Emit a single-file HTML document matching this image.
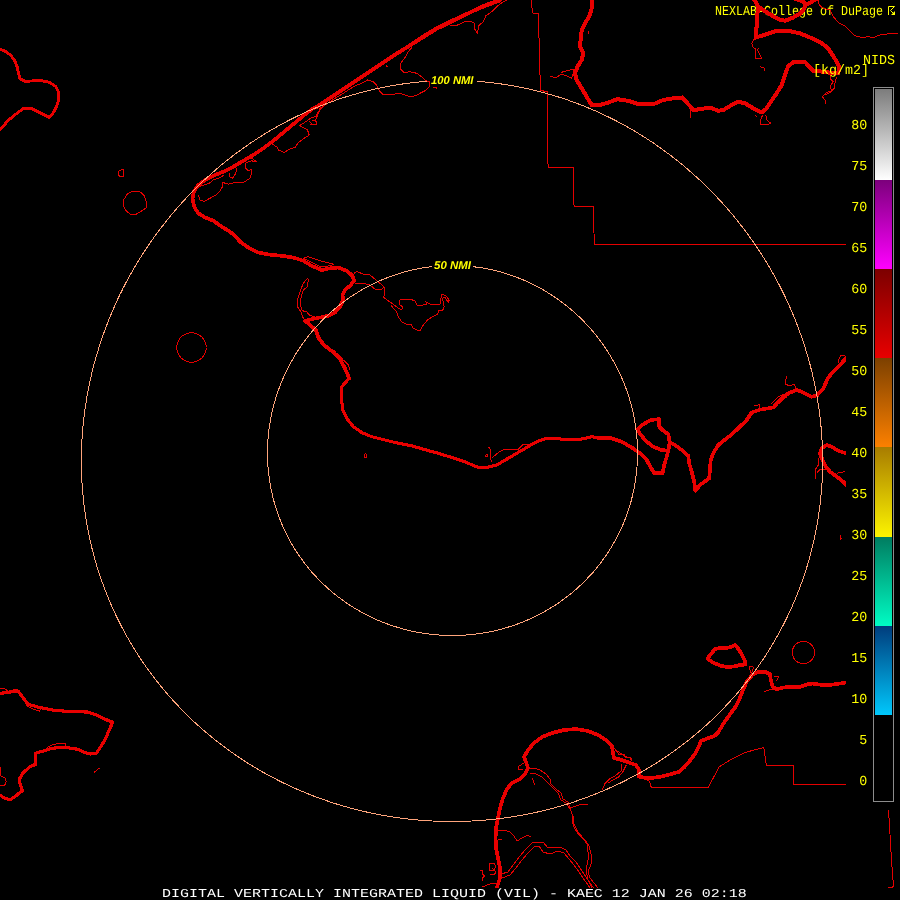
<!DOCTYPE html>
<html lang="en"><head><meta charset="utf-8"><title>DIGITAL VERTICALLY INTEGRATED LIQUID (VIL) - KAEC</title>
<style>
html,body{margin:0;padding:0;background:#000;}
body{width:900px;height:900px;overflow:hidden;}
svg{display:block;will-change:transform;}
text{text-rendering:geometricPrecision;}
.m{font-family:"Liberation Mono",monospace;font-size:13.66px;fill:#ffff00;}
.w{font-family:"Liberation Mono",monospace;font-size:13.66px;fill:#ffffff;}
.r{font-family:"Liberation Sans",sans-serif;font-weight:bold;font-style:italic;font-size:11.4px;fill:#ffff00;}
.tk{fill:none;stroke:#e80000;stroke-linejoin:round;stroke-linecap:round;}
.tn{fill:none;stroke:#e40000;stroke-width:1;stroke-linejoin:round;}
.rg{fill:none;stroke:#ffa57c;stroke-width:1;}
</style></head><body>
<svg width="900" height="900" viewBox="0 0 900 900">
<defs>
<linearGradient id="g0" x1="0" y1="0" x2="0" y2="1"><stop offset="0" stop-color="#7c7c7c"/><stop offset="1" stop-color="#ffffff"/></linearGradient>
<linearGradient id="g1" x1="0" y1="0" x2="0" y2="1"><stop offset="0" stop-color="#7c007c"/><stop offset="1" stop-color="#ff00ff"/></linearGradient>
<linearGradient id="g2" x1="0" y1="0" x2="0" y2="1"><stop offset="0" stop-color="#7c0000"/><stop offset="1" stop-color="#e80000"/></linearGradient>
<linearGradient id="g3" x1="0" y1="0" x2="0" y2="1"><stop offset="0" stop-color="#7c4000"/><stop offset="1" stop-color="#fc8000"/></linearGradient>
<linearGradient id="g4" x1="0" y1="0" x2="0" y2="1"><stop offset="0" stop-color="#a87c00"/><stop offset="1" stop-color="#fcf400"/></linearGradient>
<linearGradient id="g5" x1="0" y1="0" x2="0" y2="1"><stop offset="0" stop-color="#007c60"/><stop offset="1" stop-color="#00fcc4"/></linearGradient>
<linearGradient id="g6" x1="0" y1="0" x2="0" y2="1"><stop offset="0" stop-color="#003c7c"/><stop offset="1" stop-color="#00c8fc"/></linearGradient>
<clipPath id="cm"><path d="M0,0H900V45H846V809H900V888H0Z"/></clipPath>
</defs>
<rect width="900" height="900" fill="#000"/>
<text class="m" x="715" y="15" textLength="168" lengthAdjust="spacingAndGlyphs">NEXLAB-College of DuPage</text>
<path d="M888.5,15V6.5H894.5L890.5,10.5L894,14" fill="none" stroke="#ff0" stroke-width="1"/><path d="M895,11V15H891Z" fill="#ff0"/>
<g clip-path="url(#cm)" shape-rendering="crispEdges">
<g class="tn">
<polyline points="130.7,192 139.3,191.1 144,195.3 146,201.3 146,208 140,212 135.3,214.7 130.7,214.7 126,210.7 123.3,205.3 124,199.3 127.3,194 130.7,192"/>
<polyline points="118.7,171.3 122,169.3 123.7,170 123.7,176.7 120,176.7 118.3,174.7 118.7,171.3"/>
<polyline points="195,187.5 201.7,185.8 210.8,182.5 213.3,180 220,177.5 224.2,175"/>
<polyline points="198.3,195 200,200 204.2,201.3 210,198.3 215.8,195 220,190.8 222.5,186.7 223,182.5 228.3,184.2 235,182.5 243.3,182.5 250,178.3 251.7,173.3 252,169.2 248.3,170.8 245.8,168.3 245,164.2 246.7,162.5 251.7,160.8 256.7,162 253.3,159.2 250,158.3"/>
<polyline points="230,173.3 229.2,176.7 232.5,178.3 235.8,173.3 236.7,168.3"/>
<polyline points="272.5,144.2 277.5,147.5 278.3,150 284.2,152.5 289.2,149.2 295,147.5 298.3,142.5 304.2,138.3 309.2,135 307.5,130 303.3,127.5 299.2,125.8 303.3,123.3 308.3,120 311.7,117.5 315.8,116.7 316.7,114.2 321.7,108.3 326.7,103.3"/>
<polyline points="309.2,120.8 311.7,124.2 316.7,124.2 315.8,120.8 312.5,120"/>
<polyline points="411.7,47.5 408.3,51.7 405,57.5 400.8,63.3 400.8,69.2 404.2,72.5 410,71.7 416.7,73.3 421.7,76.7 425.8,80.8 429.2,81.7 429.2,86.7 425,90.8 420,93.3 415.8,95.8 410,96.7 405,95 400,93.3 393.3,94.2 383.3,94.7 379.2,90.8 376.7,85 373.3,81.7 367.5,80 361.7,83.3 355,85.8 348.3,90 343.3,93.3 335,98.3 320,108.3 317.5,115 315.8,120 316.7,124.2 310,124.2"/>
<polyline points="386,65 387.5,67"/>
<polyline points="432.5,87.5 437,87.5 436,89"/>
<polyline points="450,25 457.5,25 465,21.7 471.7,21.7 475,23.3 474.7,29.2 477.5,33.3 478.7,25.8 483.3,21.7 485.8,15.8 491.7,11.7 496.7,6.7 503.3,1.7 506.7,0"/>
<polyline points="531.3,0 532.5,13 538.3,13.3 539.2,44 540,75 540.8,90.8 547.5,91.3 547.5,160.8 548.5,167.5 573.5,167.5 573.5,204.2 574.5,206.5 593.5,206.5 593.5,221.7 594.5,244.5 847,244.5"/>
<polyline points="550,76.7 556.7,77.5 560.8,74.2 566.7,75.8 571.7,78.3 573.3,73.3 574.2,69.2 566.7,70.8 560.8,72.5"/>
<polyline points="588,31 588,34"/>
<polyline points="690,110 690,117.5"/>
<polyline points="818.3,0 819.2,5 823.3,8.3 830,10 833.3,16.7 838.3,22.5 845,25.8 850,30.8 855,35.8 861.7,37.5 868.3,36.7 873.3,37.5 880,35 890,33.5 898,33"/>
<polyline points="754.2,39.2 751.7,43.3 753.3,47.5 755.8,49.2 755.8,58.3 761.7,58.3 759.2,53.3 757.5,50 759.2,47.5"/>
<polyline points="760,66.7 765,68.3 764.2,70.8"/>
<polyline points="831.7,73.3 830,78.3 833.3,81.7 830,86.7 831.7,90.8 826.7,92.5 822.5,96.7 825,100 825.8,104.2"/>
<polyline points="836.7,76.7 835,83.3 834.2,88.3 830,92.5 825,95"/>
<polyline points="762.5,115 760.8,120 760,124.2 765.8,125 770.8,123.3 766.7,120 765.8,115"/>
<polyline points="755,115 757,117"/>
<polyline points="307.5,278.3 303.3,283.3 300,291.7 297.5,300 297.5,306.7 300.8,311.7 303.3,318.3 305,320.8"/>
<polyline points="308.3,279.2 307.5,286.7 303.3,290 300.8,298.3 300,305 302.5,310.8 306.7,311.7 310,315.8 315,316.3"/>
<polyline points="303.3,258.3 308.3,256.7 316.7,259.7 326.7,262.5 333.3,264.2 330,265.8 323.3,266.7 318.3,265.8 313.3,263.3 306.7,260 303.3,258.3"/>
<polyline points="354.2,273.3 356.7,271.3 363.3,274.2 370,275 375,279.2 380,283.3 384.2,287.5 384.7,293.3 383.7,297.5 388.3,300.8 393.3,304.2 397.5,307.5 401.7,310 402.5,306.7 399.2,304.2 399.7,300 404.2,299.2 410,299.2 415,300.8 416.7,305 420,305.8 426.7,304.2 425.8,301.7 430,304.2 435,305 440,304.2 440.8,299.2 441.7,294.2 445.8,295.8 449.2,300 448.3,302.5 445,297.5 442.5,298.3 444.2,306.7 442.5,310.8 439.2,310 437.5,314.2 432.5,316.7 427.5,320 423.3,325 420,330.8 416.7,330 413.3,328.3 411.7,325 406.7,324.2 401.7,321.7 398.3,316.7 396.7,311.7 393.3,308.3 390.8,305"/>
<polyline points="355,283.3 363.3,283.3 370,285 375,289.2 380,290 384.2,287.5"/>
<polyline points="336.7,353.3 343.3,360 348.3,365 350,370"/>
<polyline points="364.5,453.5 366,453.5 366.5,457.5 364.5,457.5 364.5,453.5"/>
<polyline points="488.3,446.7 490.8,450 490,456.7 491.7,461.7"/>
<polyline points="485.5,454.5 487.5,454.5 487.5,456.5 485.5,456.5 485.5,454.5"/>
<polyline points="491.7,458.3 498.3,452.5 504.2,449.2 513.3,449.7 517.5,450 522.5,445 528.3,444.7 533.3,442.5"/>
<polyline points="206.3,347.5 205.8,351.3 204.3,354.9 202,358 198.9,360.3 195.3,361.8 191.5,362.3 187.7,361.8 184.1,360.3 181,358 178.7,354.9 177.2,351.3 176.7,347.5 177.2,343.7 178.7,340.1 181,337 184.1,334.7 187.7,333.2 191.5,332.7 195.3,333.2 198.9,334.7 202,337 204.3,340.1 205.8,343.7 206.3,347.5"/>
<polyline points="814.6,652.5 814.2,655.4 813.1,658.1 811.3,660.4 809,662.2 806.3,663.3 803.4,663.7 800.5,663.3 797.8,662.2 795.5,660.4 793.7,658.1 792.6,655.4 792.2,652.5 792.6,649.6 793.7,646.9 795.5,644.6 797.8,642.8 800.5,641.7 803.4,641.3 806.3,641.7 809,642.8 811.3,644.6 813.1,646.9 814.2,649.6 814.6,652.5"/>
<polyline points="845,355.8 840.8,355.8 838.3,360 839.2,363.3"/>
<polyline points="786.7,375.8 785,384.2 790,385.8 794.2,384.2 795.8,388.3"/>
<polyline points="754.2,405.8 759.2,404.7 759.7,407.5"/>
<polyline points="770.8,404.2 778.3,396.7 786.7,393.3"/>
<polyline points="778.3,404.2 786.7,396.7"/>
<polyline points="819.2,456.7 818.3,465 815,470 815.8,475 815,479.2"/>
<polyline points="825.8,470 820,469.2 816.7,473.3"/>
<polyline points="836.7,473.3 845,471.7"/>
<polyline points="840,535 840,540 841.5,538"/>
<polyline points="763.8,692 768.2,690.2 773.6,689.3"/>
<polyline points="748.7,666.6 751.3,673.3 754,667.1 748.7,666.6"/>
<polyline points="773.6,676.9 778.9,676.5 776.2,681.3"/>
<polyline points="712.2,780 719.3,766.7 730.9,759.6 745.1,752.4 763.8,747.6 766.4,765.5 793.5,765.5 793.5,784.5 847,784.5"/>
<polyline points="645,778 649.6,781.6 651.3,787.5 708.2,787.5 718.9,767.3"/>
<polyline points="614,747.8 619.3,754.9 623.8,754 625.6,756.7 630.9,757.6 631.8,761.1"/>
<polyline points="622,763.8 621.1,770.9 614.9,776.2 609.6,778.9 605.1,783.3 602.4,789.6"/>
<polyline points="626.4,764.7 622.9,771.8 618.4,777.1 613.1,779.8 607.8,783.3"/>
<polyline points="528,769 534,768 540,770 546,774 550,779 551,784 556,789 561,793 563,799 568,802 570,808 572,814 572,822 575,829 579,835 585,840 589,846 591,854 591,864 588,872 590,878 594,883 598,888"/>
<polyline points="530,773 536,774 542,777 547,782 552,787 558,793 561,800 566,803 570,809 573,816 574,824 578,832 583,838 587,844 588,852 588,860 586,870 588,880 592,888"/>
<polyline points="570,808 576,806 582,804 588,805"/>
<polyline points="532,778 535,785"/>
<polyline points="524,763 519,766 518,770 523,769.6"/>
<polyline points="617,751 622,754 625,757 630,757 631,760"/>
<polyline points="497,830 504,830 510,832 514,836 517,841 522,838 527,835.6 531,836.4"/>
<polyline points="498,839 502,839"/>
<polyline points="501,874 508,872 514,864 520,856 526,849 532,843 538,842 544,843 547,847 554,848 560,847 566,850 570,856 576,862 580,868 584,874 588,880 592,886 594,888"/>
<polyline points="502,878 510,875 516,868 522,860 528,853 534,847 539,846 543,852 550,854 558,851 564,853 569,859 574,865 579,872 583,878 588,885 590,888"/>
<polyline points="490,863 494,863 496,867 493,871 489,870 489,866 490,863"/>
<polyline points="492,868 496,872 494,875 490,874"/>
<polyline points="480,871 483,870 482,874 485,876 482,878 483,881"/>
<polyline points="482,887 490,884 497,883"/>
<polyline points="46.7,747.8 52.9,744.7 60.7,743.1 65.3,743.9 65.3,747"/>
<polyline points="94.1,772.6 98.8,768 99.5,769.5"/>
<polyline points="0,766.4 0.8,775.8 5.4,778.1 6.2,782 4.7,785.1 0,785.1"/>
<polyline points="25.7,705 32.7,708.9 39.7,711.2 40.4,708.1"/>
<polyline points="0,688 5,689 8,691"/>
<polyline points="888.5,810 889.5,825 890.5,843 891.5,860 892.5,873 893.5,886 892,887.5 888,887.5"/>
</g>
<g class="tk">
<polyline stroke-width="2.9" points="0,49.3 5.3,51.3 10.7,55.3 14.7,60.7 17.3,67.3 18.7,74 20,78.7 25.3,81.3 33.3,80.9 41.3,80.7 49.3,82.3 56,86.7 58.7,92.7 58.7,99.3 56.7,106 53.3,112.7 49.3,117.3 44,114.7 37.3,111.3 32,108.7 23.3,108.7 18.7,112 13.3,116 8,120.7 4,125.3 0,129.3"/>
<polyline stroke-width="3.7" points="500,0 490,3.3 480,7.5 470,12.5 460,17 448.3,22.5 436.7,28.3 426.7,34.2 416.7,40.8 406.7,47.5 396.7,53.3 386.7,60 376.7,66.7 366.7,73.3 356.7,80 346.7,86.7 336.7,93.3 326.7,100 316.7,106.7 313.3,108.3 303.3,115.8 293.3,124.2 283.3,132.5 273.3,140.8 263.3,148.3 253.3,155 243.3,160.8 233.3,166.7 223.3,171.7 213.3,175.8 205,180 198.3,185 194.2,190.8 192.5,198.3 194.2,206.7 198.3,213.3 205,217.5 213.3,220.8 221.7,226.7 230,231.7 236.7,237.5 240,241.7 248.3,247.5 258.3,252.5 270,254.7 281.7,255.8 293.3,257.5 303.3,260.8 311.7,265.8 321.7,270 330,268.3 338.3,267.5 346.7,270.8 352.5,275.8 354.2,280.8 350,285.8 345,290 342.5,295 343.3,300 340,306.7 335,312.5 328.3,315.8 320,317.5 311.7,319.2 305,320.8 310,325 315.8,330 318.3,337.5 323.3,344.2 330,350 333.3,351.7 340,359.2 345,368.3 349.2,378.3"/>
<polyline stroke-width="3.1" points="349.2,378.3 341.7,386.7 341.7,400 342.5,409.2 346.7,418.3 353.3,426.7 361.7,432.5 371.7,436.7 385,440 398.3,443.3 411.7,445.8 425,449.7 438.3,453.3 451.7,457.5 465,461.7 468.3,463.3 478.3,467.5 486.7,467.5 496.7,465 506.7,459.2 516.7,453.3 526.7,447.5 536.7,441.7 546.7,438.3 556.7,438.7 568.3,439.7 578.3,439.7 585,438.3 591.7,436.7 598.3,438 611.7,438.3"/>
<polyline stroke-width="3.7" points="598.3,438 611.7,438.3 621.7,441.7 631.7,447.5 640,453.3 646.7,460 650.8,467.5 654.2,473.3 662.5,473.3 664.2,465 666.7,456.7 668.3,450.8 661.7,450 653.3,446.7 645.8,440.8 640.8,435 637.5,429.2 643.3,424.2 650.8,420 659.2,419.2 659.2,426.7 663.3,430.8 668.3,434.2 669.7,442.5 675,445 681.7,450 688.3,455.8 689.2,463.3 691.7,471.7 694.2,481.7 695.3,490.8 700,485 709.2,478.3 710,468.3 710.8,459.2 714.2,451.7 718.3,445 726.7,438.3 730,435.8 738.3,428.3 746.7,420 751.7,412.5 760,409.7 773.3,407.5 780,400 788.3,393.3 796.7,390 803.3,392.5 811.7,396.7 817.5,395 823.3,388.3 828.3,377.5 833.3,371.7 840,365 847,357"/>
<polyline stroke-width="3.7" points="669.7,442.5 668.3,450.8"/>
<polyline stroke-width="1.6" points="500,1.5 480,9 460,18.5 436.7,30 416.7,42.5 396.7,55 376.7,68.3 356.7,81.7 336.7,95 316.7,108.3"/>
<polyline stroke-width="3.7" points="847,453.6 838.3,450.8 831.7,446.7 826.7,445 821.7,448.3 820,453.3 822.5,460 825.8,466.7 830,471.7 836.7,476.7 843.3,481.7 847,486"/>
<polyline stroke-width="4" points="591.7,-2 591.7,8.3 589.2,16.7 585,23.3 581.7,30 580.8,38.3 580,46.7 583.3,53.3 581.7,60 577.5,66.7 575,73.3 576.7,80 581.7,88.3 586.7,96.7 591.7,105 600,105 608.3,102.5 617.5,99.2 628.3,100.8 638.3,104.2 653.3,104.2 663.3,100 673.3,98.3 682.5,97.5 688.3,104.2 693.3,110 700,109.2 710,107.5 718.3,110.8 723.3,110 731.7,105 738.3,101.7 745,103.3 753.3,108.3 761.7,112.5 765.8,109.2 770.8,101.7 776.7,93.3 781.7,85 785,75 788.3,65.8 794.2,61.7 805,62 809.2,66.7 813.3,70.8 823.3,71.7 833.3,73.3 838.3,73.3 839.2,66.7 834.2,57.5 827.5,47.5 820.8,42.5 810,37.5 800,33.3 788.3,30.8 776.7,30.8 766.7,34.2 755.8,37.5 756.7,25 757.5,13.3 758.3,6.7 753.3,-2"/>
<polyline stroke-width="4" points="758.3,6.7 768.3,13.3 778.3,19.2 785,20.8 793.3,17.5 801.7,12.5 805.8,5 803.3,1.7 793.3,-2"/>
<polyline stroke-width="4" points="805.8,5 816.7,-1"/>
<polyline stroke-width="3.7" points="707.5,658.5 711,654 715,649 720,648 726,648 731,647 735,645 738.5,649 742,655 745,661 745.5,664.5 740,665 734,666.5 727,667.2 720,665.5 714,663 710,660.5 707.5,658.5 711,654"/>
<polyline stroke-width="3.7" points="847,682.4 839.3,683.6 830.4,684.9 821.6,684.9 812.7,683.6 807.3,684.4 800.2,686.7 791.3,686.7 782.4,687.6 777.1,689.3 772.7,686.7 770.9,680.4 770,674.2 764.7,671.6 758.4,671.9 752.2,675.1 746.9,681.3 743.3,689.3 739.8,698.2 735.3,707.1 730,714.2 723.8,723.1 718.4,732 714.9,735.6 707.5,738.5 701,740.8 698.2,747.9 694.6,754.5 689.8,760.8 684.2,767.3 678.9,771.8 670,774.4 661.1,776.6 652.2,778 645.1,778 639,776.5 639,770 636,765 630,763 622,760 614,758 613,753 612,746 606,740 598,735 588,731 576,729 564,730 552,733 542,737 534,743 528,750 524,757 526,762 528,768 525,774 520,779 512,783 507,789 503,798 500,808 498,818 496,828 495.6,838 496,848 498,858 500,868 500,878 497,887 496,890"/>
<polyline stroke-width="3.2" points="0,693.3 7.8,692.6 14,691 17.9,691 23.3,698 28,704.2 38.9,707.3 52.9,710.1 65.3,711.2 77.8,711.7 87.1,712 94.9,714.3 104.2,719 112.8,722.1 108.9,730.7 105.8,738.4 101.1,746.2 96.4,753.2 90.2,754 84,752.4 77.8,749.3 68.4,747.8 59.1,747.4 51.3,748.5 43.5,750.9 35.8,753.2 35.8,764.1 29.5,767.2 23.3,772.6 19.4,778.9 20.2,785.1 22.6,790.5 15.6,796 10.1,799.9 4.7,798.3 0,795.2"/>
</g>
<g class="rg">
<polyline points="477.1,81.4 480.3,81.6 483.4,81.9 486.6,82.2 489.7,82.5 492.8,82.9 495.9,83.3 499.1,83.7 502.2,84.1 505.3,84.6 508.4,85.1 511.5,85.6 514.6,86.1 517.7,86.7 520.8,87.3 523.9,87.9 527.0,88.6 530.1,89.3 533.2,90.0 536.2,90.7 539.3,91.5 542.3,92.3 545.4,93.1 548.4,94.0 551.5,94.9 554.5,95.8 557.5,96.7 560.5,97.6 563.5,98.6 566.6,99.6 569.5,100.7 572.5,101.8 575.5,102.8 578.5,104.0 581.4,105.1 584.4,106.3 587.3,107.5 590.2,108.7 593.2,110.0 596.1,111.2 599.0,112.5 601.9,113.9 604.7,115.2 607.6,116.6 610.5,118.0 613.3,119.4 616.2,120.9 619.0,122.4 621.8,123.9 624.6,125.4 627.4,127.0 630.2,128.5 632.9,130.1 635.7,131.8 638.4,133.4 641.1,135.1 643.8,136.8 646.5,138.5 649.2,140.3 651.9,142.0 654.5,143.8 657.2,145.7 659.8,147.5 662.4,149.4 665.0,151.3 667.6,153.2 670.2,155.1 672.7,157.1 675.2,159.0 677.8,161.0 680.3,163.1 682.8,165.1 685.2,167.2 687.7,169.3 690.1,171.4 692.5,173.5 694.9,175.7 697.3,177.8 699.7,180.0 702.0,182.2 704.4,184.5 706.7,186.7 709.0,189.0 711.3,191.3 713.5,193.6 715.8,196.0 718.0,198.3 720.2,200.7 722.4,203.1 724.5,205.5 726.7,207.9 728.8,210.4 730.9,212.8 733.0,215.3 735.0,217.8 737.1,220.4 739.1,222.9 741.1,225.5 743.1,228.0 745.0,230.6 747.0,233.2 748.9,235.8 750.8,238.5 752.7,241.1 754.5,243.8 756.3,246.5 758.2,249.2 759.9,251.9 761.7,254.7 763.4,257.4 765.2,260.2 766.9,263.0 768.5,265.8 770.2,268.6 771.8,271.4 773.4,274.2 775.0,277.1 776.5,279.9 778.1,282.8 779.6,285.7 781.1,288.6 782.5,291.5 784.0,294.4 785.4,297.4 786.8,300.3 788.1,303.3 789.4,306.2 790.8,309.2 792.0,312.2 793.3,315.2 794.5,318.2 795.8,321.2 796.9,324.3 798.1,327.3 799.2,330.4 800.3,333.4 801.4,336.5 802.5,339.6 803.5,342.7 804.5,345.8 805.5,348.9 806.4,352.0 807.4,355.1 808.3,358.2 809.1,361.4 810.0,364.5 810.8,367.7 811.6,370.8 812.4,374.0 813.1,377.1 813.8,380.3 814.5,383.5 815.2,386.7 815.8,389.8 816.4,393.0 817.0,396.2 817.5,399.4 818.0,402.6 818.5,405.8 819.0,409.1 819.4,412.3 819.8,415.5 820.2,418.7 820.6,421.9 820.9,425.2 821.2,428.4 821.5,431.6 821.7,434.8 821.9,438.1 822.1,441.3 822.3,444.5 822.4,447.8 822.5,451.0 822.6,454.2 822.6,457.5 822.6,460.7 822.6,463.9 822.6,467.2 822.5,470.4 822.4,473.6 822.3,476.8 822.1,480.1 822.0,483.3 821.7,486.5 821.5,489.7 821.2,492.9 820.9,496.2 820.6,499.4 820.3,502.6 819.9,505.8 819.5,509.0 819.0,512.2 818.6,515.3 818.1,518.5 817.6,521.7 817.0,524.9 816.4,528.0 815.8,531.2 815.2,534.3 814.5,537.5 813.8,540.6 813.1,543.8 812.4,546.9 811.6,550.0 810.8,553.1 810.0,556.2 809.1,559.3 808.2,562.4 807.3,565.5 806.4,568.6 805.4,571.6 804.4,574.7 803.4,577.7 802.3,580.8 801.2,583.8 800.1,586.8 799.0,589.8 797.8,592.8 796.6,595.8 795.4,598.7 794.2,601.7 792.9,604.6 791.6,607.6 790.3,610.5 788.9,613.4 787.6,616.3 786.2,619.2 784.7,622.1 783.3,624.9 781.8,627.8 780.3,630.6 778.8,633.4 777.2,636.2 775.6,639.0 774.0,641.8 772.4,644.6 770.7,647.3 769.0,650.1 767.3,652.8 765.6,655.5 763.8,658.2 762.0,660.9 760.2,663.5 758.4,666.2 756.5,668.8 754.6,671.4 752.7,674.0 750.8,676.5 748.8,679.1 746.8,681.6 744.8,684.2 742.8,686.7 740.7,689.2 738.7,691.6 736.6,694.1 734.5,696.5 732.3,698.9 730.1,701.3 728.0,703.7 725.7,706.0 723.5,708.4 721.3,710.7 719.0,713.0 716.7,715.3 714.4,717.5 712.0,719.8 709.7,722.0 707.3,724.2 704.9,726.3 702.5,728.5 700.0,730.6 697.6,732.7 695.1,734.8 692.6,736.9 690.1,738.9 687.5,741.0 685.0,743.0 682.4,744.9 679.8,746.9 677.2,748.8 674.5,750.7 671.9,752.6 669.2,754.5 666.5,756.3 663.8,758.2 661.1,760.0 658.4,761.7 655.6,763.5 652.8,765.2 650.0,766.9 647.2,768.6 644.4,770.2 641.6,771.9 638.7,773.5 635.9,775.0 633.0,776.6 630.1,778.1 627.2,779.6 624.3,781.1 621.3,782.6 618.4,784.0 615.4,785.4 612.4,786.8 609.4,788.1 606.4,789.5 603.4,790.8 600.4,792.0 597.3,793.3 594.3,794.5 591.2,795.7 588.1,796.9 585.0,798.0 581.9,799.2 578.8,800.2 575.7,801.3 572.6,802.4 569.4,803.4 566.3,804.4 563.1,805.3 560.0,806.2 556.8,807.1 553.6,808.0 550.4,808.9 547.2,809.7 544.0,810.5 540.8,811.3 537.5,812.0 534.3,812.7 531.1,813.4 527.8,814.1 524.6,814.7 521.3,815.3 518.0,815.9 514.8,816.4 511.5,816.9 508.2,817.4 504.9,817.9 501.7,818.3 498.4,818.7 495.1,819.1 491.8,819.5 488.5,819.8 485.2,820.1 481.9,820.4 478.5,820.6 475.2,820.8 471.9,821.0 468.6,821.1 465.3,821.3 462.0,821.4 458.6,821.4 455.3,821.5 452.0,821.5 448.7,821.5 445.4,821.4 442.0,821.4 438.7,821.3 435.4,821.1 432.1,821.0 428.8,820.8 425.5,820.6 422.1,820.4 418.8,820.1 415.5,819.8 412.2,819.5 408.9,819.1 405.6,818.7 402.3,818.3 399.1,817.9 395.8,817.4 392.5,816.9 389.2,816.4 386.0,815.9 382.7,815.3 379.4,814.7 376.2,814.1 372.9,813.4 369.7,812.7 366.5,812.0 363.2,811.3 360.0,810.5 356.8,809.7 353.6,808.9 350.4,808.0 347.2,807.1 344.0,806.2 340.9,805.3 337.7,804.4 334.6,803.4 331.4,802.4 328.3,801.3 325.2,800.2 322.1,799.2 319.0,798.0 315.9,796.9 312.8,795.7 309.7,794.5 306.7,793.3 303.6,792.0 300.6,790.8 297.6,789.5 294.6,788.1 291.6,786.8 288.6,785.4 285.6,784.0 282.7,782.6 279.7,781.1 276.8,779.6 273.9,778.1 271.0,776.6 268.1,775.0 265.3,773.5 262.4,771.9 259.6,770.2 256.8,768.6 254.0,766.9 251.2,765.2 248.4,763.5 245.6,761.7 242.9,760.0 240.2,758.2 237.5,756.3 234.8,754.5 232.1,752.6 229.5,750.7 226.8,748.8 224.2,746.9 221.6,744.9 219.0,743.0 216.5,741.0 213.9,738.9 211.4,736.9 208.9,734.8 206.4,732.7 204.0,730.6 201.5,728.5 199.1,726.3 196.7,724.2 194.3,722.0 192.0,719.8 189.6,717.5 187.3,715.3 185.0,713.0 182.7,710.7 180.5,708.4 178.3,706.0 176.0,703.7 173.9,701.3 171.7,698.9 169.5,696.5 167.4,694.1 165.3,691.6 163.3,689.2 161.2,686.7 159.2,684.2 157.2,681.6 155.2,679.1 153.2,676.5 151.3,674.0 149.4,671.4 147.5,668.8 145.6,666.2 143.8,663.5 142.0,660.9 140.2,658.2 138.4,655.5 136.7,652.8 135.0,650.1 133.3,647.3 131.6,644.6 130.0,641.8 128.4,639.0 126.8,636.3 125.2,633.4 123.7,630.6 122.2,627.8 120.7,624.9 119.3,622.1 117.8,619.2 116.4,616.3 115.1,613.4 113.7,610.5 112.4,607.6 111.1,604.6 109.8,601.7 108.6,598.7 107.4,595.8 106.2,592.8 105.0,589.8 103.9,586.8 102.8,583.8 101.7,580.8 100.6,577.7 99.6,574.7 98.6,571.6 97.6,568.6 96.7,565.5 95.8,562.4 94.9,559.3 94.0,556.2 93.2,553.1 92.4,550.0 91.6,546.9 90.9,543.8 90.2,540.6 89.5,537.5 88.8,534.3 88.2,531.2 87.6,528.0 87.0,524.9 86.4,521.7 85.9,518.5 85.4,515.3 85.0,512.2 84.5,509.0 84.1,505.8 83.7,502.6 83.4,499.4 83.1,496.2 82.8,492.9 82.5,489.7 82.3,486.5 82.0,483.3 81.9,480.1 81.7,476.8 81.6,473.6 81.5,470.4 81.4,467.2 81.4,463.9 81.4,460.7 81.4,457.5 81.4,454.2 81.5,451.0 81.6,447.8 81.7,444.5 81.9,441.3 82.1,438.1 82.3,434.8 82.5,431.6 82.8,428.4 83.1,425.2 83.4,421.9 83.8,418.7 84.2,415.5 84.6,412.3 85.0,409.1 85.5,405.8 86.0,402.6 86.5,399.4 87.0,396.2 87.6,393.0 88.2,389.8 88.8,386.7 89.5,383.5 90.2,380.3 90.9,377.1 91.6,374.0 92.4,370.8 93.2,367.7 94.0,364.5 94.9,361.4 95.7,358.2 96.6,355.1 97.6,352.0 98.5,348.9 99.5,345.8 100.5,342.7 101.5,339.6 102.6,336.5 103.7,333.4 104.8,330.4 105.9,327.3 107.1,324.3 108.2,321.2 109.5,318.2 110.7,315.2 112.0,312.2 113.2,309.2 114.6,306.2 115.9,303.3 117.2,300.3 118.6,297.4 120.0,294.4 121.5,291.5 122.9,288.6 124.4,285.7 125.9,282.8 127.5,279.9 129.0,277.1 130.6,274.2 132.2,271.4 133.8,268.6 135.5,265.8 137.1,263.0 138.8,260.2 140.6,257.4 142.3,254.7 144.1,251.9 145.8,249.2 147.7,246.5 149.5,243.8 151.3,241.1 153.2,238.5 155.1,235.8 157.0,233.2 159.0,230.6 160.9,228.0 162.9,225.5 164.9,222.9 166.9,220.4 169.0,217.8 171.0,215.3 173.1,212.8 175.2,210.4 177.3,207.9 179.5,205.5 181.6,203.1 183.8,200.7 186.0,198.3 188.2,196.0 190.5,193.6 192.7,191.3 195.0,189.0 197.3,186.7 199.6,184.5 202.0,182.2 204.3,180.0 206.7,177.8 209.1,175.7 211.5,173.5 213.9,171.4 216.3,169.3 218.8,167.2 221.2,165.1 223.7,163.1 226.2,161.0 228.8,159.0 231.3,157.1 233.8,155.1 236.4,153.2 239.0,151.3 241.6,149.4 244.2,147.5 246.8,145.7 249.5,143.8 252.1,142.0 254.8,140.3 257.5,138.5 260.2,136.8 262.9,135.1 265.6,133.4 268.3,131.8 271.1,130.1 273.8,128.5 276.6,127.0 279.4,125.4 282.2,123.9 285.0,122.4 287.8,120.9 290.7,119.4 293.5,118.0 296.4,116.6 299.3,115.2 302.1,113.9 305.0,112.5 307.9,111.2 310.8,110.0 313.8,108.7 316.7,107.5 319.6,106.3 322.6,105.1 325.5,104.0 328.5,102.8 331.5,101.8 334.5,100.7 337.4,99.6 340.5,98.6 343.5,97.6 346.5,96.7 349.5,95.8 352.5,94.9 355.6,94.0 358.6,93.1 361.7,92.3 364.7,91.5 367.8,90.7 370.8,90.0 373.9,89.3 377.0,88.6 380.1,87.9 383.2,87.3 386.3,86.7 389.4,86.1 392.5,85.6 395.6,85.1 398.7,84.6 401.8,84.1 404.9,83.7 408.1,83.3 411.2,82.9 414.3,82.5 417.4,82.2 420.6,81.9 423.7,81.6 426.9,81.4"/>
<polyline points="473.2,266.7 474.7,266.9 476.3,267.1 477.9,267.3 479.5,267.5 481.1,267.8 482.6,268.0 484.2,268.3 485.8,268.6 487.3,268.9 488.9,269.2 490.5,269.5 492.0,269.9 493.6,270.2 495.1,270.6 496.7,271.0 498.2,271.4 499.8,271.8 501.3,272.2 502.8,272.7 504.4,273.1 505.9,273.6 507.4,274.1 508.9,274.6 510.4,275.1 512.0,275.6 513.5,276.1 515.0,276.7 516.5,277.2 518.0,277.8 519.4,278.4 520.9,279.0 522.4,279.6 523.9,280.2 525.4,280.8 526.8,281.5 528.3,282.2 529.7,282.8 531.2,283.5 532.6,284.2 534.0,284.9 535.5,285.7 536.9,286.4 538.3,287.2 539.7,287.9 541.1,288.7 542.5,289.5 543.9,290.3 545.3,291.1 546.7,291.9 548.0,292.8 549.4,293.6 550.8,294.5 552.1,295.3 553.5,296.2 554.8,297.1 556.1,298.0 557.4,299.0 558.7,299.9 560.0,300.8 561.3,301.8 562.6,302.8 563.9,303.7 565.2,304.7 566.4,305.7 567.7,306.7 568.9,307.7 570.2,308.8 571.4,309.8 572.6,310.9 573.8,311.9 575.0,313.0 576.2,314.1 577.4,315.2 578.6,316.3 579.8,317.4 580.9,318.5 582.1,319.7 583.2,320.8 584.3,322.0 585.4,323.2 586.6,324.3 587.6,325.5 588.7,326.7 589.8,327.9 590.9,329.1 591.9,330.4 593.0,331.6 594.0,332.8 595.0,334.1 596.1,335.3 597.1,336.6 598.1,337.9 599.0,339.2 600.0,340.5 601.0,341.8 601.9,343.1 602.9,344.4 603.8,345.7 604.7,347.0 605.6,348.4 606.5,349.7 607.4,351.1 608.3,352.5 609.1,353.8 610.0,355.2 610.8,356.6 611.6,358.0 612.4,359.4 613.2,360.8 614.0,362.2 614.8,363.6 615.6,365.1 616.3,366.5 617.1,368.0 617.8,369.4 618.5,370.9 619.2,372.3 619.9,373.8 620.6,375.3 621.2,376.7 621.9,378.2 622.5,379.7 623.2,381.2 623.8,382.7 624.4,384.2 625.0,385.7 625.5,387.2 626.1,388.7 626.6,390.3 627.2,391.8 627.7,393.3 628.2,394.9 628.7,396.4 629.2,398.0 629.7,399.5 630.1,401.1 630.6,402.6 631.0,404.2 631.4,405.7 631.8,407.3 632.2,408.9 632.6,410.5 632.9,412.0 633.3,413.6 633.6,415.2 633.9,416.8 634.3,418.4 634.6,420.0 634.8,421.6 635.1,423.2 635.3,424.8 635.6,426.4 635.8,428.0 636.0,429.6 636.2,431.2 636.4,432.8 636.6,434.4 636.7,436.0 636.9,437.6 637.0,439.2 637.1,440.8 637.2,442.4 637.3,444.0 637.4,445.7 637.4,447.3 637.5,448.9 637.5,450.5 637.5,452.1 637.5,453.7 637.5,455.3 637.5,457.0 637.4,458.6 637.4,460.2 637.3,461.8 637.2,463.4 637.1,465.0 637.0,466.6 636.9,468.2 636.7,469.8 636.6,471.4 636.4,473.0 636.2,474.6 636.0,476.2 635.8,477.8 635.6,479.4 635.4,481.0 635.1,482.6 634.8,484.2 634.6,485.8 634.3,487.4 634.0,489.0 633.6,490.5 633.3,492.1 632.9,493.7 632.6,495.3 632.2,496.8 631.8,498.4 631.4,499.9 631.0,501.5 630.6,503.0 630.1,504.6 629.6,506.1 629.2,507.7 628.7,509.2 628.2,510.7 627.7,512.3 627.1,513.8 626.6,515.3 626.0,516.8 625.5,518.3 624.9,519.8 624.3,521.3 623.7,522.8 623.1,524.3 622.4,525.7 621.8,527.2 621.1,528.7 620.4,530.1 619.8,531.6 619.1,533.0 618.3,534.5 617.6,535.9 616.9,537.4 616.1,538.8 615.4,540.2 614.6,541.6 613.8,543.0 613.0,544.4 612.2,545.8 611.3,547.2 610.5,548.5 609.7,549.9 608.8,551.3 607.9,552.6 607.0,554.0 606.1,555.3 605.2,556.6 604.3,557.9 603.3,559.2 602.4,560.5 601.4,561.8 600.5,563.1 599.5,564.4 598.5,565.7 597.5,566.9 596.5,568.2 595.4,569.4 594.4,570.6 593.4,571.9 592.3,573.1 591.2,574.3 590.1,575.5 589.0,576.7 587.9,577.8 586.8,579.0 585.7,580.2 584.6,581.3 583.4,582.5 582.3,583.6 581.1,584.7 579.9,585.8 578.7,586.9 577.5,588.0 576.3,589.1 575.1,590.1 573.9,591.2 572.6,592.2 571.4,593.3 570.1,594.3 568.9,595.3 567.6,596.3 566.3,597.3 565.0,598.2 563.7,599.2 562.4,600.2 561.1,601.1 559.8,602.0 558.4,603.0 557.1,603.9 555.8,604.8 554.4,605.7 553.0,606.5 551.7,607.4 550.3,608.2 548.9,609.1 547.5,609.9 546.1,610.7 544.7,611.5 543.2,612.3 541.8,613.1 540.4,613.8 538.9,614.6 537.5,615.3 536.0,616.1 534.6,616.8 533.1,617.5 531.6,618.2 530.2,618.8 528.7,619.5 527.2,620.2 525.7,620.8 524.2,621.4 522.7,622.0 521.2,622.6 519.6,623.2 518.1,623.8 516.6,624.3 515.0,624.9 513.5,625.4 511.9,625.9 510.4,626.4 508.8,626.9 507.3,627.4 505.7,627.9 504.2,628.3 502.6,628.8 501.0,629.2 499.4,629.6 497.8,630.0 496.3,630.4 494.7,630.8 493.1,631.1 491.5,631.5 489.9,631.8 488.3,632.1 486.7,632.4 485.1,632.7 483.4,633.0 481.8,633.2 480.2,633.5 478.6,633.7 477.0,633.9 475.3,634.1 473.7,634.3 472.1,634.5 470.5,634.6 468.8,634.8 467.2,634.9 465.6,635.0 463.9,635.2 462.3,635.2 460.7,635.3 459.0,635.4 457.4,635.4 455.8,635.5 454.1,635.5 452.5,635.5 450.9,635.5 449.2,635.5 447.6,635.4 446.0,635.4 444.3,635.3 442.7,635.2 441.1,635.2 439.4,635.0 437.8,634.9 436.2,634.8 434.5,634.6 432.9,634.5 431.3,634.3 429.7,634.1 428.0,633.9 426.4,633.7 424.8,633.5 423.2,633.2 421.6,633.0 419.9,632.7 418.3,632.4 416.7,632.1 415.1,631.8 413.5,631.5 411.9,631.1 410.3,630.8 408.7,630.4 407.2,630.0 405.6,629.6 404.0,629.2 402.4,628.8 400.8,628.3 399.3,627.9 397.7,627.4 396.2,626.9 394.6,626.4 393.1,625.9 391.5,625.4 390.0,624.9 388.4,624.3 386.9,623.8 385.4,623.2 383.8,622.6 382.3,622.0 380.8,621.4 379.3,620.8 377.8,620.2 376.3,619.5 374.8,618.8 373.4,618.2 371.9,617.5 370.4,616.8 369.0,616.1 367.5,615.3 366.1,614.6 364.6,613.8 363.2,613.1 361.8,612.3 360.3,611.5 358.9,610.7 357.5,609.9 356.1,609.1 354.7,608.2 353.3,607.4 352.0,606.5 350.6,605.7 349.2,604.8 347.9,603.9 346.6,603.0 345.2,602.0 343.9,601.1 342.6,600.2 341.3,599.2 340.0,598.2 338.7,597.3 337.4,596.3 336.1,595.3 334.9,594.3 333.6,593.3 332.4,592.2 331.1,591.2 329.9,590.1 328.7,589.1 327.5,588.0 326.3,586.9 325.1,585.8 323.9,584.7 322.7,583.6 321.6,582.5 320.4,581.3 319.3,580.2 318.2,579.0 317.1,577.8 316.0,576.7 314.9,575.5 313.8,574.3 312.7,573.1 311.6,571.9 310.6,570.6 309.6,569.4 308.5,568.2 307.5,566.9 306.5,565.7 305.5,564.4 304.5,563.1 303.6,561.8 302.6,560.5 301.7,559.2 300.7,557.9 299.8,556.6 298.9,555.3 298.0,554.0 297.1,552.6 296.2,551.3 295.3,549.9 294.5,548.5 293.7,547.2 292.8,545.8 292.0,544.4 291.2,543.0 290.4,541.6 289.6,540.2 288.9,538.8 288.1,537.4 287.4,535.9 286.7,534.5 285.9,533.0 285.2,531.6 284.6,530.1 283.9,528.7 283.2,527.2 282.6,525.7 281.9,524.3 281.3,522.8 280.7,521.3 280.1,519.8 279.5,518.3 279.0,516.8 278.4,515.3 277.9,513.8 277.3,512.3 276.8,510.7 276.3,509.2 275.8,507.7 275.4,506.1 274.9,504.6 274.4,503.0 274.0,501.5 273.6,499.9 273.2,498.4 272.8,496.8 272.4,495.3 272.1,493.7 271.7,492.1 271.4,490.5 271.0,489.0 270.7,487.4 270.4,485.8 270.2,484.2 269.9,482.6 269.6,481.0 269.4,479.4 269.2,477.8 269.0,476.2 268.8,474.6 268.6,473.0 268.4,471.4 268.3,469.8 268.1,468.2 268.0,466.6 267.9,465.0 267.8,463.4 267.7,461.8 267.6,460.2 267.6,458.6 267.5,457.0 267.5,455.3 267.5,453.7 267.5,452.1 267.5,450.5 267.5,448.9 267.6,447.3 267.6,445.7 267.7,444.0 267.8,442.4 267.9,440.8 268.0,439.2 268.1,437.6 268.3,436.0 268.4,434.4 268.6,432.8 268.8,431.2 269.0,429.6 269.2,428.0 269.4,426.4 269.7,424.8 269.9,423.2 270.2,421.6 270.4,420.0 270.7,418.4 271.1,416.8 271.4,415.2 271.7,413.6 272.1,412.0 272.4,410.5 272.8,408.9 273.2,407.3 273.6,405.7 274.0,404.2 274.4,402.6 274.9,401.1 275.3,399.5 275.8,398.0 276.3,396.4 276.8,394.9 277.3,393.3 277.8,391.8 278.4,390.3 278.9,388.7 279.5,387.2 280.0,385.7 280.6,384.2 281.2,382.7 281.8,381.2 282.5,379.7 283.1,378.2 283.8,376.7 284.4,375.3 285.1,373.8 285.8,372.3 286.5,370.9 287.2,369.4 287.9,368.0 288.7,366.5 289.4,365.1 290.2,363.6 291.0,362.2 291.8,360.8 292.6,359.4 293.4,358.0 294.2,356.6 295.0,355.2 295.9,353.8 296.7,352.5 297.6,351.1 298.5,349.7 299.4,348.4 300.3,347.0 301.2,345.7 302.1,344.4 303.1,343.1 304.0,341.8 305.0,340.5 306.0,339.2 306.9,337.9 307.9,336.6 308.9,335.3 310.0,334.1 311.0,332.8 312.0,331.6 313.1,330.4 314.1,329.1 315.2,327.9 316.3,326.7 317.4,325.5 318.4,324.3 319.6,323.2 320.7,322.0 321.8,320.8 322.9,319.7 324.1,318.5 325.2,317.4 326.4,316.3 327.6,315.2 328.8,314.1 330.0,313.0 331.2,311.9 332.4,310.9 333.6,309.8 334.8,308.8 336.1,307.7 337.3,306.7 338.6,305.7 339.8,304.7 341.1,303.7 342.4,302.8 343.7,301.8 345.0,300.8 346.3,299.9 347.6,299.0 348.9,298.0 350.2,297.1 351.5,296.2 352.9,295.3 354.2,294.5 355.6,293.6 357.0,292.8 358.3,291.9 359.7,291.1 361.1,290.3 362.5,289.5 363.9,288.7 365.3,287.9 366.7,287.2 368.1,286.4 369.5,285.7 371.0,284.9 372.4,284.2 373.8,283.5 375.3,282.8 376.7,282.2 378.2,281.5 379.6,280.8 381.1,280.2 382.6,279.6 384.1,279.0 385.6,278.4 387.0,277.8 388.5,277.2 390.0,276.7 391.5,276.1 393.0,275.6 394.6,275.1 396.1,274.6 397.6,274.1 399.1,273.6 400.6,273.1 402.2,272.7 403.7,272.2 405.2,271.8 406.8,271.4 408.3,271.0 409.9,270.6 411.4,270.2 413.0,269.9 414.5,269.5 416.1,269.2 417.7,268.9 419.2,268.6 420.8,268.3 422.4,268.0 423.9,267.8 425.5,267.5 427.1,267.3 428.7,267.1 430.3,266.9 431.8,266.7"/>
</g>
</g>
<text class="r" x="431" y="84" textLength="42.5" lengthAdjust="spacingAndGlyphs">100 NMI</text>
<text class="r" x="434" y="269" textLength="37" lengthAdjust="spacingAndGlyphs">50 NMI</text>
<text class="m" x="863" y="64" textLength="32" lengthAdjust="spacingAndGlyphs">NIDS</text>
<text class="m" x="813" y="74" textLength="56" lengthAdjust="spacingAndGlyphs">[kg/m2]</text>
<text class="m" x="851.2" y="129" textLength="16" lengthAdjust="spacingAndGlyphs">80</text>
<text class="m" x="851.2" y="170" textLength="16" lengthAdjust="spacingAndGlyphs">75</text>
<text class="m" x="851.2" y="211" textLength="16" lengthAdjust="spacingAndGlyphs">70</text>
<text class="m" x="851.2" y="252" textLength="16" lengthAdjust="spacingAndGlyphs">65</text>
<text class="m" x="851.2" y="293" textLength="16" lengthAdjust="spacingAndGlyphs">60</text>
<text class="m" x="851.2" y="334" textLength="16" lengthAdjust="spacingAndGlyphs">55</text>
<text class="m" x="851.2" y="375" textLength="16" lengthAdjust="spacingAndGlyphs">50</text>
<text class="m" x="851.2" y="416" textLength="16" lengthAdjust="spacingAndGlyphs">45</text>
<text class="m" x="851.2" y="457" textLength="16" lengthAdjust="spacingAndGlyphs">40</text>
<text class="m" x="851.2" y="498" textLength="16" lengthAdjust="spacingAndGlyphs">35</text>
<text class="m" x="851.2" y="539" textLength="16" lengthAdjust="spacingAndGlyphs">30</text>
<text class="m" x="851.2" y="580" textLength="16" lengthAdjust="spacingAndGlyphs">25</text>
<text class="m" x="851.2" y="621" textLength="16" lengthAdjust="spacingAndGlyphs">20</text>
<text class="m" x="851.2" y="662" textLength="16" lengthAdjust="spacingAndGlyphs">15</text>
<text class="m" x="851.2" y="703" textLength="16" lengthAdjust="spacingAndGlyphs">10</text>
<text class="m" x="859.2" y="744" textLength="8" lengthAdjust="spacingAndGlyphs">5</text>
<text class="m" x="859.2" y="785" textLength="8" lengthAdjust="spacingAndGlyphs">0</text>
<g shape-rendering="crispEdges">
<rect x="873.5" y="87.5" width="20" height="714" fill="none" stroke="#8c8c8c" stroke-width="1"/>
<rect x="875" y="89" width="17" height="91" fill="url(#g0)"/>
<rect x="875" y="180" width="17" height="89" fill="url(#g1)"/>
<rect x="875" y="269" width="17" height="89" fill="url(#g2)"/>
<rect x="875" y="358" width="17" height="89" fill="url(#g3)"/>
<rect x="875" y="447" width="17" height="90" fill="url(#g4)"/>
<rect x="875" y="537" width="17" height="89" fill="url(#g5)"/>
<rect x="875" y="626" width="17" height="89" fill="url(#g6)"/>
</g>
<text class="w" transform="translate(162,897) scale(1.0979,0.8889)" x="0" y="0">DIGITAL VERTICALLY INTEGRATED LIQUID (VIL) - KAEC 12 JAN 26 02:18</text>
</svg>
</body></html>
